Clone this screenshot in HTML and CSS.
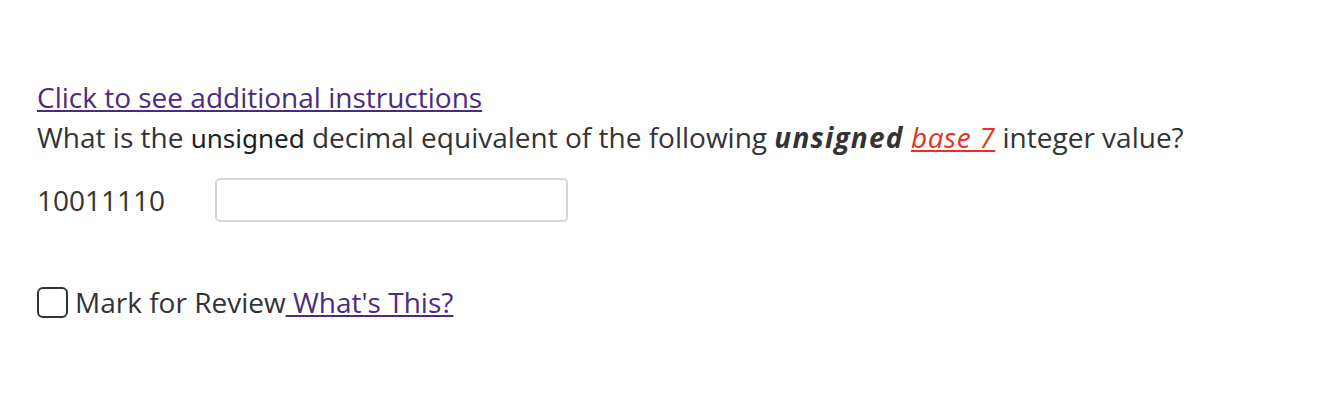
FILE: index.html
```html
<!DOCTYPE html>
<html>
<head>
<meta charset="utf-8">
<link rel="stylesheet" href="styles.css">
</head>
<body>
<div class="question">
  <a class="instr" href="#">Click to see additional instructions</a>
  <div class="prompt">What is the <span class="sys">unsigned</span> decimal equivalent of the following <b class="strong"><i>unsigned</i></b> <a class="base" href="#"><i>base 7</i></a> integer value?</div>
  <div class="answer-row">
    <span class="value">10011110</span>
    <input class="answer" type="text">
  </div>
  <div class="review">
    <span class="box"></span>
    <span class="review-label">Mark for Review</span><a class="whats" href="#"> What's This?</a>
  </div>
</div>
</body>
</html>
```

FILE: styles.css
```css
html, body {
  margin: 0;
  padding: 0;
  background: #fff;
}
body {
  font-family: "Open Sans", "Noto Sans", sans-serif;
  color: #333;
  font-size: 28px;
}
.question {
  padding: 77px 0 0 37px;
}
.instr {
  display: block;
  color: #4b2a85;
  text-decoration: underline;
  line-height: 40px;
  width: max-content;
}
.prompt {
  line-height: 40px;
}
.sys {
  font-family: "Noto Sans", sans-serif;
  font-size: 26px;
  color: #1e1e1e;
}
.strong {
  font-weight: 700;
  letter-spacing: 1.2px;
}
.base {
  color: #e8311f;
  letter-spacing: 0.6px;
}
.answer-row {
  display: flex;
  align-items: center;
  margin-top: 20px;
}
.value {
  width: 178px;
  line-height: 40px;
}
.answer {
  width: 353px;
  height: 44px;
  box-sizing: border-box;
  border: 2px solid #d6d6d6;
  border-radius: 5px;
  margin: 0;
}
.review {
  display: flex;
  align-items: center;
  margin-top: 60px;
  line-height: 40px;
}
.box {
  width: 31px;
  height: 31px;
  box-sizing: border-box;
  border: 2px solid #333;
  border-radius: 6px;
  margin-right: 7px;
}
.whats {
  color: #4b2a85;
  text-decoration: underline;
  white-space: pre;
}
```
